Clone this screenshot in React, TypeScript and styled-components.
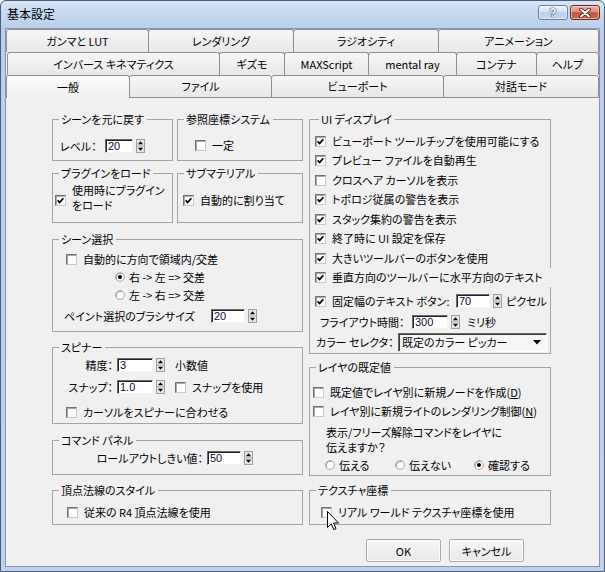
import React from "react";
import styled, { createGlobalStyle } from "styled-components";

const UI_FONT = `"Noto Sans CJK JP", "Liberation Sans", sans-serif`;

const GlobalStyle = createGlobalStyle`
  html, body { margin: 0; padding: 0; background: #ffffff; }
  * { box-sizing: border-box; }
  body {
    font-family: ${UI_FONT};
    font-size: 11px;
    color: #000;
    font-feature-settings: "palt" 1;
  }
`;

const Window = styled.div`
  position: relative;
  width: 605px;
  height: 572px;
  border: 1px solid #4b5d74;
  border-radius: 6px 6px 0 0;
  background: linear-gradient(180deg, #d7e5f6 0px, #c4d8ef 14px, #bad0ea 27px, #bdd2ec 100%);
  display: flex;
  flex-direction: column;
  overflow: hidden;
`;

const TitleBar = styled.div`
  height: 27px;
  flex: none;
  display: flex;
  align-items: flex-start;
  padding: 0 4px 0 6px;
`;

const TitleText = styled.div`
  flex: 1;
  font-size: 12px;
  line-height: 26px;
  font-feature-settings: normal;
`;

const CaptionButtons = styled.div`
  display: flex;
  gap: 2px;
  margin-top: 4px;
`;

const CaptionButton = styled.div<{ $variant: "help" | "close" }>`
  width: 30px;
  height: 15px;
  border: 1px solid ${(p) => (p.$variant === "close" ? "#70291e" : "#6a7f9c")};
  border-radius: 3px;
  background: ${(p) =>
    p.$variant === "close"
      ? "linear-gradient(180deg, #eab0a3 0%, #dc8b7a 45%, #c9523c 52%, #d16b52 100%)"
      : "linear-gradient(180deg, #edf3fa 0%, #d6e2f0 45%, #b8cce4 52%, #c8d9ec 100%)"};
  box-shadow: inset 0 0 0 1px rgba(255, 255, 255, 0.45);
  display: flex;
  align-items: center;
  justify-content: center;
`;

const HelpGlyph = styled.span`
  font-family: "Liberation Sans", sans-serif;
  font-weight: bold;
  font-size: 12px;
  line-height: 12px;
  color: #ffffff;
  text-shadow: 0 0 1px #1f3554, 0 0 1px #1f3554, 0 0 1px #1f3554;
`;

const Client = styled.div`
  margin: 0 4px;
  height: 539px;
  flex: none;
  border: 1px solid #8598b1;
  background: #f0f0f0;
  display: flex;
  flex-direction: column;
`;

const TabRow = styled.div<{ $indent: number; $h: number }>`
  display: flex;
  flex: none;
  height: ${(p) => p.$h}px;
  padding-left: ${(p) => p.$indent}px;
`;

const Tab = styled.div<{ $w: number; $active?: boolean; $base?: boolean }>`
  flex: none;
  width: ${(p) => p.$w}px;
  margin-left: -1px;
  &:first-child {
    margin-left: 0;
  }
  border: 1px solid #8c8f96;
  border-bottom: ${(p) => (p.$base && !p.$active ? "1px solid #8c8f96" : "none")};
  border-radius: 3px 3px 0 0;
  background: ${(p) =>
    p.$active
      ? "linear-gradient(180deg, #fcfcfc 0%, #f0f0f0 100%)"
      : "linear-gradient(180deg, #f7f7f7 0%, #eeeeee 55%, #e8e8e8 100%)"};
  display: flex;
  align-items: center;
  justify-content: center;
  font-size: 11px;
  line-height: 13px;
  white-space: nowrap;
`;

const Panel = styled.div`
  flex: 1;
  display: grid;
  grid-template-columns: 251px 242px;
  grid-template-rows: 363px 41px auto;
  column-gap: 6px;
  row-gap: 8px;
  padding: 15px 48px 0 46px;
  align-content: start;
`;

const Stack = styled.div`
  display: flex;
  flex-direction: column;
`;

const Pair = styled.div<{ $mt?: number }>`
  display: grid;
  grid-template-columns: 121px 126px;
  column-gap: 4px;
  margin-top: ${(p) => p.$mt ?? 0}px;
`;

const Group = styled.fieldset<{ $h: number; $mt?: number }>`
  margin: ${(p) => p.$mt ?? 0}px 0 0 0;
  padding: 0;
  min-width: 0;
  height: ${(p) => p.$h}px;
  border: 1px solid #a4a4a4;
`;

const Legend = styled.legend<{ $inset?: number }>`
  margin-left: ${(p) => p.$inset ?? 6}px;
  padding: 0 3px 0 2px;
  height: 13px;
  line-height: 13px;
  font-size: 11px;
  white-space: nowrap;
`;

const Body = styled.div<{ $pt: number }>`
  display: flex;
  flex-direction: column;
  padding-top: ${(p) => p.$pt}px;
`;

const Line = styled.div<{ $h: number; $mt?: number; $pl?: number }>`
  display: flex;
  align-items: center;
  flex: none;
  height: ${(p) => p.$h}px;
  margin-top: ${(p) => p.$mt ?? 0}px;
  padding-left: ${(p) => p.$pl ?? 0}px;
  white-space: nowrap;
  line-height: 13px;
`;

const Label = styled.span<{ $w?: number; $right?: boolean }>`
  flex: none;
  display: inline-block;
  width: ${(p) => (p.$w ? `${p.$w}px` : "auto")};
  text-align: ${(p) => (p.$right ? "right" : "left")};
  padding-right: ${(p) => (p.$right ? 4 : 0)}px;
`;

const WideLabel = styled.span`
  flex: none;
  width: 224px;
  height: 19px;
  line-height: 19px;
  background: #f0f0f0;
`;

const MultiLabel = styled.span<{ $lh: number }>`
  display: block;
  line-height: ${(p) => p.$lh}px;
  white-space: nowrap;
`;

const Note = styled.span<{ $ml: number }>`
  margin-left: ${(p) => p.$ml}px;
`;

const Box = styled.span<{ $low?: boolean }>`
  position: relative;
  flex: none;
  width: 11px;
  height: 11px;
  margin-right: 6px;
  margin-top: ${(p) => (p.$low ? 4 : 0)}px;
  background: #ffffff;
  border: 1px solid;
  border-color: #727272 #c9c9c9 #c9c9c9 #727272;
  box-shadow: inset 1px 1px 0 #a8a8a8;
  display: flex;
  align-items: center;
  justify-content: center;
`;

const RadioWrap = styled.span`
  flex: none;
  width: 10px;
  height: 10px;
  margin-right: 4px;
  display: flex;
`;

const RadioItem = styled.span<{ $w?: number }>`
  display: flex;
  align-items: center;
  width: ${(p) => (p.$w ? `${p.$w}px` : "auto")};
`;

const NumInput = styled.span<{ $w: number }>`
  flex: none;
  width: ${(p) => p.$w}px;
  height: 14px;
  background: #ffffff;
  border: 1px solid;
  border-color: #6c6c6c #f4f4f4 #f4f4f4 #6c6c6c;
  box-shadow: inset 1px 1px 0 #202020;
  padding-left: 2px;
  font-family: "Liberation Sans", sans-serif;
  font-size: 11px;
  line-height: 12px;
  color: #0a0a3a;
`;

const SpinWrap = styled.span`
  flex: none;
  display: flex;
  margin-left: 3px;
`;

const Combo = styled.div`
  flex: none;
  width: 149px;
  height: 19px;
  background: #f6f6f6;
  border: 1px solid;
  border-color: #6a6a6a #ffffff #ffffff #6a6a6a;
  box-shadow: inset 1px 1px 0 #3a3a3a;
  display: flex;
  align-items: center;
  justify-content: space-between;
  padding: 0 5px 0 3px;
`;

const CursorLayer = styled.span`
  position: absolute;
  left: 5px;
  top: 3px;
  width: 12px;
  height: 20px;
  pointer-events: none;
  z-index: 3;
`;

const ButtonRow = styled.div`
  grid-column: 1 / -1;
  display: flex;
  justify-content: flex-end;
  gap: 8px;
  padding-right: 27px;
  margin-top: 6px;
`;

const Button = styled.button`
  width: 75px;
  height: 23px;
  padding: 0;
  font-family: ${UI_FONT};
  font-feature-settings: "palt" 1;
  font-size: 11px;
  color: #000;
  border: 1px solid #a9a9a9;
  border-radius: 2px;
  background: linear-gradient(180deg, #f8f8f8 0%, #efefef 50%, #e9e9e9 100%);
  box-shadow: inset 0 0 0 1px #fcfcfc;
`;

/* ---------- small drawings ---------- */

const CheckMark = () => (
  <svg width="7" height="7" viewBox="0 0 7 7">
    <path d="M0.6 3.4 L2.6 5.4 L6.4 1.2" stroke="#000" strokeWidth="1.7" fill="none" />
  </svg>
);

const Radio = ({ on }: { on?: boolean }) => (
  <RadioWrap>
    <svg width="10" height="10" viewBox="0 0 10 10">
      <circle cx="5" cy="5" r="4.4" fill="#ffffff" stroke="#a6a6a6" strokeWidth="1" />
      <path d="M1.6 6.8 A4 4 0 0 1 6.8 1.6" stroke="#8a8a8a" fill="none" strokeWidth="0.8" />
      {on && <circle cx="5" cy="5" r="2" fill="#000" />}
    </svg>
  </RadioWrap>
);

const SpinArrows = () => (
  <svg width="9" height="14" viewBox="0 0 9 14">
    <rect x="0.5" y="0.5" width="8" height="13" fill="#e4e4e4" stroke="#a0a0a0" />
    <line x1="1" y1="7" x2="8" y2="7" stroke="#b0b0b0" />
    <path d="M4.5 2.3 L7 5.3 L2 5.3 Z" fill="#000" />
    <path d="M2 8.7 L7 8.7 L4.5 11.7 Z" fill="#000" />
  </svg>
);

const Spinner = ({ value, w }: { value: string; w: number }) => (
  <>
    <NumInput $w={w}>{value}</NumInput>
    <SpinWrap>
      <SpinArrows />
    </SpinWrap>
  </>
);

const Check = ({ on, low, children }: { on?: boolean; low?: boolean; children?: React.ReactNode }) => (
  <Box $low={low}>
    {on && <CheckMark />}
    {children}
  </Box>
);

const Cursor = () => (
  <CursorLayer>
    <svg width="12" height="20" viewBox="0 0 12 20">
      <path
        d="M0.5 0.5 L0.5 16.5 L4.3 12.8 L6.8 18.6 L9 17.6 L6.6 12 L11.5 12 Z"
        fill="#ffffff"
        stroke="#000"
        strokeWidth="1"
        strokeLinejoin="miter"
      />
    </svg>
  </CursorLayer>
);

const CloseGlyph = () => (
  <svg width="12" height="10" viewBox="0 0 12 10">
    <path d="M2 1.5 L10 8.5 M10 1.5 L2 8.5" stroke="#4a1810" strokeWidth="3.6" strokeLinecap="round" />
    <path d="M2 1.5 L10 8.5 M10 1.5 L2 8.5" stroke="#ffffff" strokeWidth="2" strokeLinecap="round" />
  </svg>
);

const ComboArrow = () => (
  <svg width="8" height="5" viewBox="0 0 8 5">
    <path d="M0 0 L8 0 L4 4.5 Z" fill="#000" />
  </svg>
);

/* ---------- data ---------- */

type TabDef = { label: string; w: number; active?: boolean };
const tabRows: { indent: number; h: number; base?: boolean; tabs: TabDef[] }[] = [
  {
    indent: 0,
    h: 23,
    tabs: [
      { label: "ガンマと LUT", w: 143 },
      { label: "レンダリング", w: 146 },
      { label: "ラジオシティ", w: 146 },
      { label: "アニメーション", w: 161 },
    ],
  },
  {
    indent: 1,
    h: 23,
    tabs: [
      { label: "インバース キネマティクス", w: 213 },
      { label: "ギズモ", w: 66 },
      { label: "MAXScript", w: 85 },
      { label: "mental ray", w: 89 },
      { label: "コンテナ", w: 81 },
      { label: "ヘルプ", w: 63 },
    ],
  },
  {
    indent: 0,
    h: 23,
    base: true,
    tabs: [
      { label: "一般", w: 124, active: true },
      { label: "ファイル", w: 143 },
      { label: "ビューポート", w: 173 },
      { label: "対話モード", w: 156 },
    ],
  },
];

const uiChecks: { label: string; on: boolean; wide?: boolean }[] = [
  { label: "ビューポート ツールチップを使用可能にする", on: true },
  { label: "プレビュー ファイルを自動再生", on: true },
  { label: "クロスヘア カーソルを表示", on: false },
  { label: "トポロジ従属の警告を表示", on: true },
  { label: "スタック集約の警告を表示", on: true },
  { label: "終了時に UI 設定を保存", on: true },
  { label: "大きいツールバーのボタンを使用", on: true },
  { label: "垂直方向のツールバーに水平方向のテキスト", on: true, wide: true },
];

export default function App() {
  return (
    <>
      <GlobalStyle />
      <Window>
        <TitleBar>
          <TitleText>基本設定</TitleText>
          <CaptionButtons>
            <CaptionButton $variant="help">
              <HelpGlyph>?</HelpGlyph>
            </CaptionButton>
            <CaptionButton $variant="close">
              <CloseGlyph />
            </CaptionButton>
          </CaptionButtons>
        </TitleBar>

        <Client>
          {tabRows.map((row, i) => (
            <TabRow key={i} $indent={row.indent} $h={row.h}>
              {row.tabs.map((t) => (
                <Tab key={t.label} $w={t.w} $active={t.active} $base={row.base}>
                  {t.label}
                </Tab>
              ))}
            </TabRow>
          ))}

          <Panel>
            {/* left column */}
            <Stack>
              <Pair>
                <Group $h={48}>
                  <Legend>シーンを元に戻す</Legend>
                  <Body $pt={13}>
                    <Line $h={14} $pl={7}>
                      <Label $w={45}>レベル：</Label>
                      <Spinner value="20" w={28} />
                    </Line>
                  </Body>
                </Group>
                <Group $h={48}>
                  <Legend>参照座標システム</Legend>
                  <Body $pt={12}>
                    <Line $h={14} $pl={17}>
                      <Check />
                      <span>一定</span>
                    </Line>
                  </Body>
                </Group>
              </Pair>

              <Pair $mt={6}>
                <Group $h={56}>
                  <Legend>プラグインをロード</Legend>
                  <Body $pt={3}>
                    <Line $h={30} $pl={2}>
                      <Check on low />
                      <MultiLabel $lh={15}>
                        使用時にプラグイン
                        <br />
                        をロード
                      </MultiLabel>
                    </Line>
                  </Body>
                </Group>
                <Group $h={56}>
                  <Legend>サブマテリアル</Legend>
                  <Body $pt={13}>
                    <Line $h={14} $pl={5}>
                      <Check on />
                      <span>自動的に割り当て</span>
                    </Line>
                  </Body>
                </Group>
              </Pair>

              <Group $h={99} $mt={10}>
                <Legend>シーン選択</Legend>
                <Body $pt={4}>
                  <Line $h={18} $pl={13}>
                    <Check />
                    <span>自動的に方向で領域内/交差</span>
                  </Line>
                  <Line $h={18} $pl={62}>
                    <Radio on />
                    <span>右 -&gt; 左 =&gt; 交差</span>
                  </Line>
                  <Line $h={18} $pl={62}>
                    <Radio />
                    <span>左 -&gt; 右 =&gt; 交差</span>
                  </Line>
                  <Line $h={20} $mt={2} $pl={11}>
                    <Label $w={147}>ペイント選択のブラシサイズ</Label>
                    <Spinner value="20" w={34} />
                  </Line>
                </Body>
              </Group>

              <Group $h={83} $mt={9}>
                <Legend>スピナー</Legend>
                <Body $pt={2}>
                  <Line $h={18}>
                    <Label $w={64} $right>
                      精度：
                    </Label>
                    <Spinner value="3" w={36} />
                    <Note $ml={10}>小数値</Note>
                  </Line>
                  <Line $h={18} $mt={4}>
                    <Label $w={64} $right>
                      スナップ：
                    </Label>
                    <Spinner value="1.0" w={36} />
                    <Note $ml={10} />
                    <Check />
                    <span>スナップを使用</span>
                  </Line>
                  <Line $h={18} $mt={7} $pl={13}>
                    <Check />
                    <span>カーソルをスピナーに合わせる</span>
                  </Line>
                </Body>
              </Group>

              <Group $h={41} $mt={10}>
                <Legend>コマンド パネル</Legend>
                <Body $pt={2}>
                  <Line $h={18}>
                    <Label $w={154} $right>
                      ロールアウトしきい値：
                    </Label>
                    <Spinner value="50" w={34} />
                  </Line>
                </Body>
              </Group>
            </Stack>

            {/* right column */}
            <Stack>
              <Group $h={241}>
                <Legend $inset={9}>UI ディスプレイ</Legend>
                <Body $pt={5.25}>
                  {uiChecks.map((c) => (
                    <Line key={c.label} $h={19.5} $pl={5}>
                      <Check on={c.on} />
                      {c.wide ? <WideLabel>{c.label}</WideLabel> : <span>{c.label}</span>}
                    </Line>
                  ))}
                  <Line $h={22} $mt={2.75} $pl={5}>
                    <Check on />
                    <Label $w={124}>固定幅のテキスト ボタン:</Label>
                    <Spinner value="70" w={34} />
                    <Note $ml={4}>ピクセル</Note>
                  </Line>
                  <Line $h={20} $pl={10}>
                    <Label $w={92}>フライアウト時間：</Label>
                    <Spinner value="300" w={36} />
                    <Note $ml={7}>ミリ秒</Note>
                  </Line>
                  <Line $h={20} $pl={6}>
                    <Label $w={82}>カラー セレクタ：</Label>
                    <Combo>
                      <span>既定のカラー ピッカー</span>
                      <ComboArrow />
                    </Combo>
                  </Line>
                </Body>
              </Group>

              <Group $h={115} $mt={7}>
                <Legend>レイヤの既定値</Legend>
                <Body $pt={8.5}>
                  <Line $h={19} $pl={3}>
                    <Check />
                    <span>
                      既定値でレイヤ別に新規ノードを作成(<u>D</u>)
                    </span>
                  </Line>
                  <Line $h={19} $pl={3}>
                    <Check />
                    <span>
                      レイヤ別に新規ライトのレンダリング制御(<u>N</u>)
                    </span>
                  </Line>
                  <Line $h={30} $mt={4.5} $pl={16}>
                    <MultiLabel $lh={15}>
                      表示/フリーズ解除コマンドをレイヤに
                      <br />
                      伝えますか？
                    </MultiLabel>
                  </Line>
                  <Line $h={16} $mt={2} $pl={15}>
                    <RadioItem $w={70}>
                      <Radio />
                      <span>伝える</span>
                    </RadioItem>
                    <RadioItem $w={79}>
                      <Radio />
                      <span>伝えない</span>
                    </RadioItem>
                    <RadioItem>
                      <Radio on />
                      <span>確認する</span>
                    </RadioItem>
                  </Line>
                </Body>
              </Group>
            </Stack>

            {/* bottom row */}
            <Group $h={41}>
              <Legend>頂点法線のスタイル</Legend>
              <Body $pt={6}>
                <Line $h={18} $pl={14}>
                  <Check />
                  <span>従来の R4 頂点法線を使用</span>
                </Line>
              </Body>
            </Group>
            <Group $h={41}>
              <Legend>テクスチャ座標</Legend>
              <Body $pt={6}>
                <Line $h={18} $pl={11}>
                  <Check>
                    <Cursor />
                  </Check>
                  <span>リアル ワールド テクスチャ座標を使用</span>
                </Line>
              </Body>
            </Group>

            <ButtonRow>
              <Button>OK</Button>
              <Button>キャンセル</Button>
            </ButtonRow>
          </Panel>
        </Client>
      </Window>
    </>
  );
}
